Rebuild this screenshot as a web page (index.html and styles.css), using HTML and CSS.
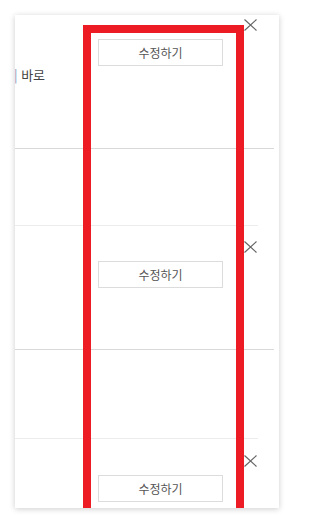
FILE: index.html
```html
<!DOCTYPE html>
<html lang="ko">
<head>
<meta charset="utf-8">
<link rel="stylesheet" href="styles.css">
</head>
<body>
<div class="panel">
  <div class="card">
    <div class="card-top card-top--first">
      <button class="close" aria-label="닫기"><svg width="13" height="12" viewBox="0 0 13 12"><path d="M0.5 0.5L12.5 11.5M12.5 0.5L0.5 11.5" stroke="#666" stroke-width="1.2" fill="none"/></svg></button>
      <button class="edit">수정하기</button>
      <p class="desc"><span class="bar">|</span> 바로</p>
    </div>
    <div class="card-bottom card-bottom--first"></div>
  </div>
  <div class="card">
    <div class="card-top card-top--second">
      <button class="close" aria-label="닫기"><svg width="13" height="12" viewBox="0 0 13 12"><path d="M0.5 0.5L12.5 11.5M12.5 0.5L0.5 11.5" stroke="#666" stroke-width="1.2" fill="none"/></svg></button>
      <button class="edit">수정하기</button>
    </div>
    <div class="card-bottom card-bottom--second"></div>
  </div>
  <div class="card">
    <div class="card-top card-top--third">
      <button class="close" aria-label="닫기"><svg width="13" height="12" viewBox="0 0 13 12"><path d="M0.5 0.5L12.5 11.5M12.5 0.5L0.5 11.5" stroke="#666" stroke-width="1.2" fill="none"/></svg></button>
      <button class="edit">수정하기</button>
    </div>
  </div>
  <div class="highlight"></div>
</div>
</body>
</html>
```
FILE: styles.css
```css
html, body {
  margin: 0;
  padding: 0;
  background: #fff;
  font-family: "Noto Sans CJK KR", "Noto Sans", sans-serif;
}

body {
  width: 294px;
  height: 524px;
  overflow: hidden;
}

.panel {
  position: relative;
  margin: 15px 0 0 15px;
  width: 264px;
  height: 493px;
  overflow: hidden;
  background: #fff;
  box-shadow: 0 1px 6px rgba(0, 0, 0, 0.2);
}

.card-top {
  position: relative;
  box-sizing: border-box;
  margin-right: 5px;
  border-bottom: 1px solid #d9d9d9;
}

.card-top--first {
  height: 134px;
  padding-top: 24px;
}

.card-top--second {
  height: 124px;
  padding-top: 35px;
}

.card-top--third {
  height: 100px;
  padding-top: 36px;
  border-bottom: none;
}

.card-bottom {
  box-sizing: border-box;
  margin-right: 21px;
  border-bottom: 1px solid #ececec;
}

.card-bottom--first {
  height: 77px;
}

.card-bottom--second {
  height: 89px;
}

.close {
  position: absolute;
  right: 17px;
  width: 13px;
  height: 12px;
  padding: 0;
  border: none;
  background: none;
  line-height: 0;
}

.card-top--first .close { top: 4px; }
.card-top--second .close { top: 15px; }
.card-top--third .close { top: 16px; }

.edit {
  display: block;
  box-sizing: border-box;
  margin-left: 83px;
  width: 125px;
  height: 27px;
  padding: 0;
  border: 1px solid #dcdcdc;
  background: #fff;
  color: #555;
  font-family: "Noto Sans CJK KR", "Noto Sans", sans-serif;
  font-size: 12px;
  line-height: 25px;
  text-align: center;
}

.desc {
  margin: 0;
  font-size: 13px;
  line-height: 16px;
  color: #444;
}

.card-top--first .desc {
  margin-top: 1px;
}

.bar {
  color: #8a8fb0;
  margin-left: -1px;
}

.highlight {
  position: absolute;
  left: 68px;
  top: 10px;
  width: 161px;
  bottom: -20px;
  box-sizing: border-box;
  border: 8px solid #ed1c24;
  pointer-events: none;
}
```
